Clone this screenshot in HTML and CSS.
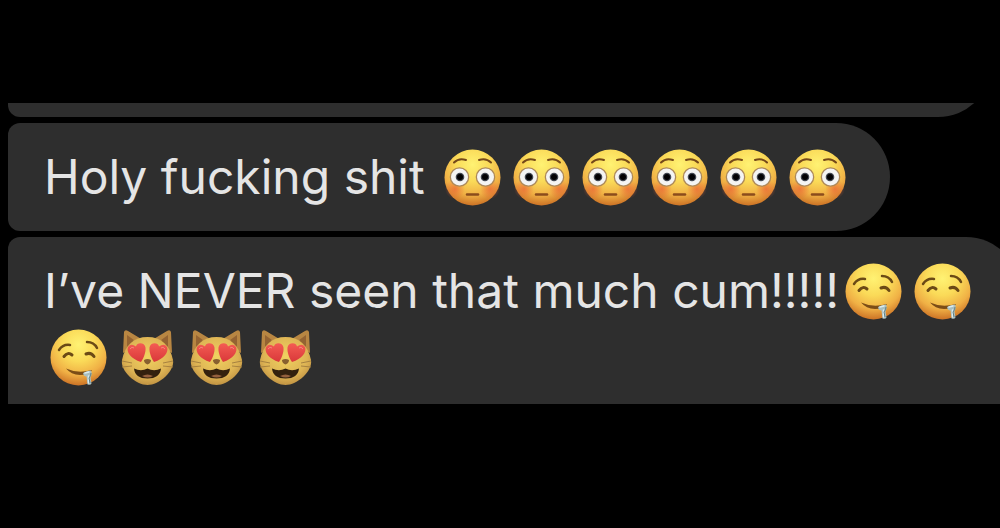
FILE: index.html
```html
<!DOCTYPE html>
<html lang="en">
<head>
<meta charset="utf-8">
<meta name="viewport" content="width=device-width, initial-scale=1">
<title>Messages</title>
<link rel="stylesheet" href="styles.css">
</head>
<body>
<svg class="sprites" aria-hidden="true">
  <defs>
    <radialGradient id="skin" cx=".5" cy=".27" r=".75">
      <stop offset="0" stop-color="#fff273"/><stop offset=".4" stop-color="#fada58"/><stop offset=".72" stop-color="#f0b045"/><stop offset="1" stop-color="#c86c22"/>
    </radialGradient>
    <radialGradient id="blush"><stop offset="0" stop-color="#ea6234" stop-opacity=".7"/><stop offset="1" stop-color="#ea6234" stop-opacity="0"/></radialGradient>
    <radialGradient id="fur" cx=".5" cy=".4" r=".65"><stop offset="0" stop-color="#f0d260"/><stop offset=".65" stop-color="#deb454"/><stop offset="1" stop-color="#b98a3e"/></radialGradient>
    <linearGradient id="heart" x2="0" y2="1"><stop offset="0" stop-color="#f45c53"/><stop offset="1" stop-color="#d9383a"/></linearGradient>
    <symbol id="flushed" viewBox="0 0 57 57">
      <circle cx="28.500" cy="28.500" r="28" fill="url(#skin)"/>
      <circle cx="11" cy="40" r="10" fill="url(#blush)"/><circle cx="46" cy="40" r="10" fill="url(#blush)"/>
      <path d="M10 13.500q5-5 12-2.500M35 11q7-2.500 12 2.500" fill="none" stroke="#75491a" stroke-width="2" stroke-linecap="round"/>
      <circle cx="15.500" cy="28" r="9.800" fill="#ad895a"/><circle cx="41.500" cy="28" r="9.800" fill="#ad895a"/>
      <circle cx="15.500" cy="28" r="8.500" fill="#f4f4f3"/><circle cx="41.500" cy="28" r="8.500" fill="#f4f4f3"/>
      <circle cx="16" cy="28" r="4.300" fill="#414650"/><circle cx="41" cy="28" r="4.300" fill="#414650"/>
      <circle cx="16" cy="28" r="3" fill="#020204"/><circle cx="41" cy="28" r="3" fill="#020204"/>
      <path d="M23 45.500h11" stroke="#8b4c1c" stroke-width="2.500" stroke-linecap="round"/>
    </symbol>
    <symbol id="drool" viewBox="0 0 57 57">
      <circle cx="28.500" cy="28.500" r="28" fill="url(#skin)"/>
      <g fill="none" stroke="#6b4a16" stroke-width="2.500" stroke-linecap="round">
        <path d="M9 21q4-6 11-5M37 13q7 0 10 6"/>
        <path d="M14 27.500q4-5 8-1.500M36 25q5-2 8 2.500" stroke-width="3"/>
      </g>
      <path d="M16 39.500q12 5.500 26 1.500q-2 5-12 5q-9-.500-14-6.500z" fill="#7b4d17"/>
      <path d="M33 44q4-2.500 8-2.500q1.500 3-.500 7l1 6q-1 2-4 1l-1-8q-3 0-3.500-3.500z" fill="#a9bfc0"/>
      <path d="M35 44l4-1M38.500 47v7" fill="none" stroke="#dceced" stroke-width="1.500" stroke-linecap="round"/>
      <path d="M41 44q0 3-2 5l1 5" fill="none" stroke="#617f83" stroke-width="1"/>
    </symbol>
    <symbol id="cat" viewBox="0 0 57 57">
      <path d="M4 24L5 3q1-3 4-1l15 9zM53 24L52 3q-1-3-4-1l-15 9z" fill="#b88642"/>
      <path d="M8 18L8 6l11 8zM49 18L49 6l-11 8z" fill="#946332"/>
      <path d="M28.500 8C15 8 6 16 3 31C1 42 17 56 28.500 56S56 42 54 31C51 16 42 8 28.500 8z" fill="url(#fur)"/>
      <g id="heart-eye"><path d="M22 33C12 30 7 23 9 18q3-4 8-.500c1-5 9-4 9.500 1c.500 5-2 11-4.500 14.500z" fill="url(#heart)"/><path d="M11 20q2-3 4-1" stroke="#f7857b" fill="none" stroke-width="1"/></g>
      <use href="#heart-eye" transform="translate(57 0) scale(-1 1)"/>
      <path d="M25 31q3.500-2 7 0q0 3-3.500 4.500q-3.500-1.500-3.500-4.500z" fill="#87602f"/>
      <path d="M15 39.500q7 3.500 13.500 0q6.500 3.500 13.500 0q-1 10-13.500 10T15 39.500z" fill="#33210e"/>
      <path d="M23 47q5.500-3 11 0q-5 3-11 0z" fill="#94603d"/>
      <path d="M3 32l10 2M3 38l10-1M54 32l-10 2M54 38l-10-1" fill="none" stroke="#a78240" stroke-width="1"/>
    </symbol>
  </defs>
</svg>
<main class="thread">
  <div class="bubble bubble-previous"></div>
  <p class="bubble">Holy fucking shit <svg class="emoji" role="img" aria-label="Flushed face"><use href="#flushed"/></svg><svg class="emoji" role="img" aria-label="Flushed face"><use href="#flushed"/></svg><svg class="emoji" role="img" aria-label="Flushed face"><use href="#flushed"/></svg><svg class="emoji" role="img" aria-label="Flushed face"><use href="#flushed"/></svg><svg class="emoji" role="img" aria-label="Flushed face"><use href="#flushed"/></svg><svg class="emoji" role="img" aria-label="Flushed face"><use href="#flushed"/></svg></p>
  <p class="bubble bubble-last">I’ve NEVER seen that much cum!!!!!<svg class="emoji" role="img" aria-label="Drooling face"><use href="#drool"/></svg><svg class="emoji" role="img" aria-label="Drooling face"><use href="#drool"/></svg><br><svg class="emoji" role="img" aria-label="Drooling face"><use href="#drool"/></svg><svg class="emoji" role="img" aria-label="Heart-eyes cat"><use href="#cat"/></svg><svg class="emoji" role="img" aria-label="Heart-eyes cat"><use href="#cat"/></svg><svg class="emoji" role="img" aria-label="Heart-eyes cat"><use href="#cat"/></svg></p>
</main>
</body>
</html>
```

FILE: styles.css
```css
body {
  margin: 0;
  background: #000;
  color: #e5e5e5;
  font: 48px/66px Inter, "Liberation Sans", sans-serif;
}

.sprites {
  position: absolute;
  width: 0;
  height: 0;
}

.thread {
  display: flex;
  flex-direction: column;
  align-items: flex-start;
  gap: 6px;
  margin-top: 103px;
  padding-left: 8px;
  overflow: hidden;
}

.bubble {
  box-sizing: border-box;
  margin: 0;
  padding: 21px 38px 21px 36px;
  border-radius: 12px 54px 54px 12px;
  background: #2e2e2e;
}

.bubble-previous {
  align-self: stretch;
  height: 108px;
  margin: -94px 8px 0 0;
}

.bubble-last {
  align-self: stretch;
  margin-right: -20px;
  padding-right: 0;
  padding-bottom: 14px;
  border-radius: 12px 54px 0 0;
}

.emoji {
  width: 57px;
  height: 57px;
  margin: 0 6px;
  vertical-align: -12px;
}
```
